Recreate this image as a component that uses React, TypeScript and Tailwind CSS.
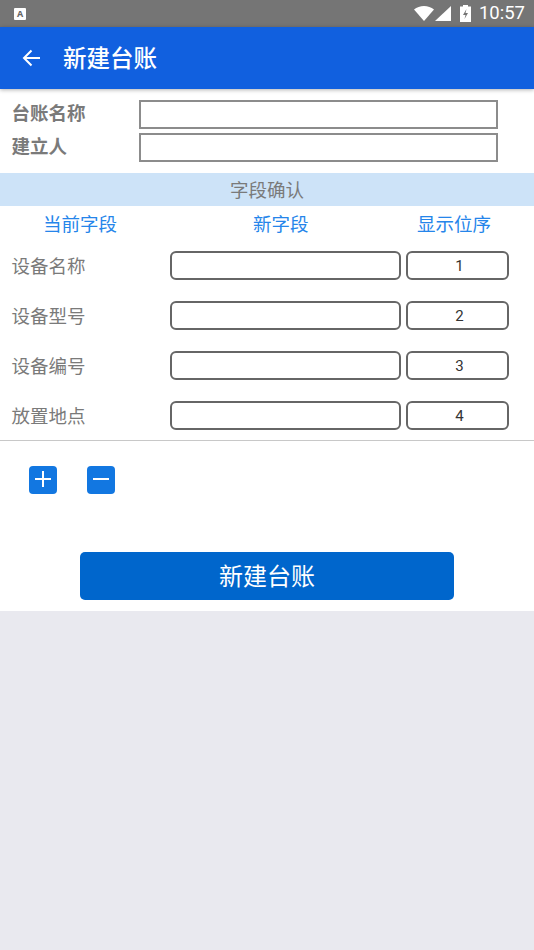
const cjk = "font-['Roboto','Noto_Sans_CJK_SC',sans-serif]";

function StatusBar() {
  return (
    <div className="flex h-[27px] items-center bg-[#757575] pl-[14px] pr-[9px]">
      <div className="flex h-[12px] w-[12px] items-center justify-center rounded-[1px] bg-white">
        <span className="text-[9px] leading-none font-bold text-[#666]">A</span>
      </div>
      <div className="ml-auto flex items-center">
        <svg width="20" height="15" viewBox="0 0 20 15">
          <path d="M0 3.500C2.800 1.200 6.200 0 10 0s7.200 1.200 10 3.500L10 15z" fill="#fff" />
        </svg>
        <svg width="16" height="15" viewBox="0 0 16 15" className="ml-[1px]">
          <path d="M16 0v15H0z" fill="#fff" />
        </svg>
        <svg width="11" height="17" viewBox="0 0 11 17" className="ml-[9px]">
          <path d="M3 0h5v1.500h3V17H0V1.500h3z" fill="#fff" />
          <path d="M6.500 4 3 10h2.500l-1 4L8 8H5.500z" fill="#757575" />
        </svg>
        <span className="ml-[8px] font-['Roboto',sans-serif] text-[18.5px] leading-none text-white">10:57</span>
      </div>
    </div>
  );
}

function Header() {
  return (
    <div className="relative flex h-[62px] items-center bg-[#1160df] pl-[22px] shadow-[0_1px_4px_rgba(0,0,0,0.3)]">
      <svg width="18" height="18" viewBox="0 0 18 18" fill="none" stroke="#fff" strokeWidth="2">
        <path d="M18 9H2M9.500 1.500 2 9l7.500 7.500" />
      </svg>
      <span className={`ml-[23px] translate-y-[2px] text-[23.5px] leading-none font-medium text-white ${cjk}`}>新建台账</span>
    </div>
  );
}

function NameRow({ label }: { label: string }) {
  return (
    <div className="flex h-[29px] items-center pl-[11.500px]">
      <span className={`w-[127.500px] text-[18.5px] font-bold text-[#7a7a7a] ${cjk}`}>{label}</span>
      <div className="h-[29px] w-[359px] border-2 border-[#8c8c8c] bg-white" />
    </div>
  );
}

function FieldRow({ label, order }: { label: string; order: number }) {
  return (
    <div className="flex h-[29px] items-center pl-[11.500px]">
      <span className={`w-[158.500px] translate-y-[2px] text-[18.5px] text-[#7a7a7a] ${cjk}`}>{label}</span>
      <div className="h-[29px] w-[231px] rounded-[6px] border-2 border-[#666] bg-white" />
      <div className={`ml-[5px] flex h-[29px] w-[103px] items-center justify-center rounded-[6px] border-2 border-[#666] bg-white pl-[4px] text-[15px] text-[#333] ${cjk}`}>
        <span className="translate-y-[0.5px]">{order}</span>
      </div>
    </div>
  );
}

function IconButton({ minus }: { minus?: boolean }) {
  return (
    <div className="flex h-[28px] w-[28px] items-center justify-center rounded-[4px] bg-[#1277e1]">
      <svg width="20" height="20" viewBox="0 0 20 20" stroke="#fff" strokeWidth="2" className="-translate-y-[1px]">
        <path d={minus ? "M2 10h16" : "M2 10h16M10 2v16"} />
      </svg>
    </div>
  );
}

export default function App() {
  const fields = ["设备名称", "设备型号", "设备编号", "放置地点"];
  return (
    <div className="flex h-[950px] w-[534px] flex-col overflow-hidden bg-[#e9e9ef]">
      <StatusBar />
      <Header />
      <div className="h-[522px] bg-white pt-[11px]">
        <div className="flex flex-col gap-[4px]">
          <NameRow label="台账名称" />
          <NameRow label="建立人" />
        </div>
        <div className={`mt-[11px] flex h-[33px] items-center justify-center bg-[#cde3f8] text-[18.5px] text-[#7a7a7a] ${cjk}`}>
          <span className="translate-y-[2px]">字段确认</span>
        </div>
        <div className={`flex h-[36px] items-center text-[18.5px] text-[#2585ea] ${cjk}`}>
          <span className="ml-[43px] translate-y-[2px]">当前字段</span>
          <span className="ml-[136px] translate-y-[2px]">新字段</span>
          <span className="ml-[108.500px] translate-y-[2px]">显示位序</span>
        </div>
        <div className="mt-[9px] flex flex-col gap-[21px]">
          {fields.map((f, i) => (
            <FieldRow key={f} label={f} order={i + 1} />
          ))}
        </div>
        <div className="mt-[10px] h-px bg-[#c8c8c8]" />
        <div className="mt-[25px] flex gap-[30px] pl-[29px]">
          <IconButton />
          <IconButton minus />
        </div>
        <div className="mt-[58px] flex justify-center">
          <div className={`flex h-[48px] w-[374px] items-center justify-center rounded-[5px] bg-[#0066cc] text-[24px] text-white ${cjk}`}>
            <span className="translate-y-[1px]">新建台账</span>
          </div>
        </div>
      </div>
    </div>
  );
}
